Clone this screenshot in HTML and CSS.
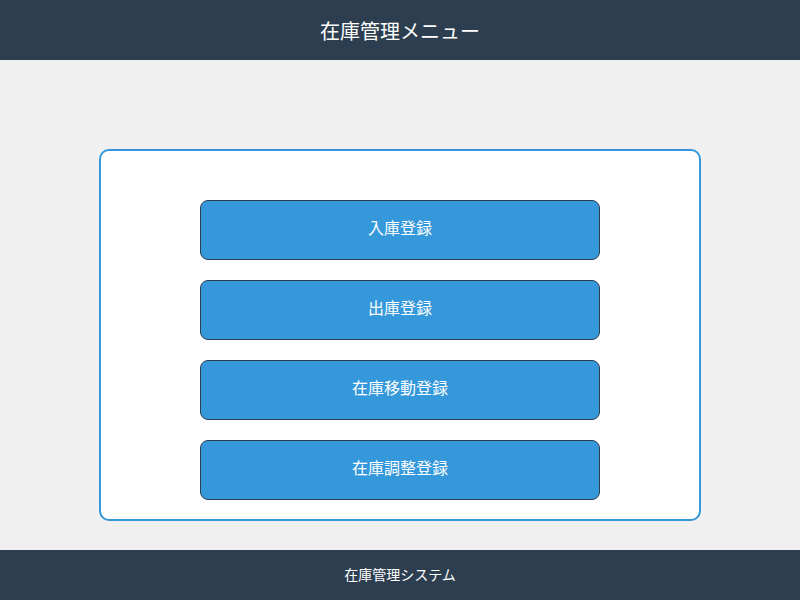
FILE: index.html
```html
<!DOCTYPE html>
<html lang="ja">
<head>
<meta charset="utf-8">
<title>在庫管理メニュー</title>
<link rel="stylesheet" href="styles.css">
</head>
<body>
<header class="header">在庫管理メニュー</header>
<main class="main">
  <div class="card">
    <button class="menu-btn">入庫登録</button>
    <button class="menu-btn">出庫登録</button>
    <button class="menu-btn">在庫移動登録</button>
    <button class="menu-btn">在庫調整登録</button>
  </div>
</main>
<footer class="footer">在庫管理システム</footer>
</body>
</html>
```
FILE: styles.css
```css
* { box-sizing: border-box; }
html, body { margin: 0; padding: 0; }
body {
  width: 800px;
  height: 600px;
  background: #f0f0f0;
  font-family: "Noto Sans CJK JP", "Noto Sans", sans-serif;
  display: flex;
  flex-direction: column;
}
.header {
  height: 60px;
  background: #2c3e50;
  color: #ffffff;
  font-size: 20px;
  display: flex;
  align-items: center;
  justify-content: center;
}
.main {
  flex: 1;
  padding-top: 89px;
  display: flex;
  justify-content: center;
  align-items: flex-start;
}
.card {
  width: 602px;
  height: 372px;
  background: #ffffff;
  border: 2px solid #3498db;
  border-radius: 10px;
  padding: 49px 99px 0;
  display: flex;
  flex-direction: column;
  gap: 20px;
}
.menu-btn {
  height: 60px;
  width: 400px;
  background: #3498db;
  color: #ffffff;
  border: 1px solid #2c3e50;
  border-radius: 8px;
  font-family: inherit;
  font-size: 16px;
  padding: 0 0 6px;
}
.footer {
  height: 50px;
  background: #2c3e50;
  color: #ffffff;
  font-size: 14px;
  padding-bottom: 2px;
  display: flex;
  align-items: center;
  justify-content: center;
}
```
